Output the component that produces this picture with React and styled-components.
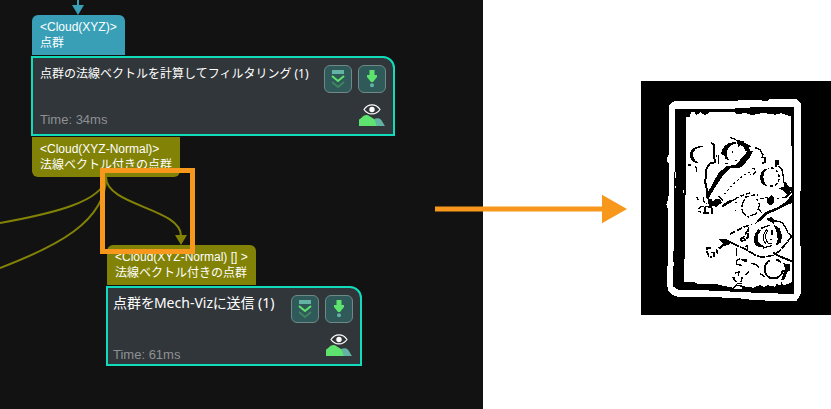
// App.jsx
import React from 'react';
import styled, { createGlobalStyle } from 'styled-components';

const colors = {
  canvas: '#121212',
  card: '#31363a',
  accent: '#10dcbc',
  cloud: '#389fb7',
  normal: '#828306',
  mark: '#f7981d',
  green: '#5ee46e',
  teal: '#62b3a4',
};

const GlobalStyle = createGlobalStyle`
  * {
    box-sizing: border-box;
  }
  body {
    margin: 0;
    background: #fff;
    font-family: 'Liberation Sans', 'Noto Sans CJK JP', sans-serif;
  }
`;

const Page = styled.main`
  display: grid;
  grid-template-columns: minmax(0, 1fr) 348px;
  min-height: 100vh;
`;

const Canvas = styled.section`
  position: relative;
  overflow: hidden;
  background: ${colors.canvas};
`;

const Wires = styled.svg`
  position: absolute;
  top: 0;
  left: 0;
  width: 483px;
  height: 409px;
  pointer-events: none;
`;

const Node = styled.article`
  position: absolute;
  left: ${({ $x }) => $x}px;
  top: ${({ $y }) => $y}px;
  width: ${({ $width }) => $width}px;
  display: flex;
  flex-direction: column;
  align-items: flex-start;
  gap: 1px;
`;

const Port = styled.div`
  height: 40px;
  margin-left: 1px;
  padding: 4px 8px;
  border-radius: ${({ $out }) => ($out ? '0 0 6px 6px' : '6px 6px 0 0')};
  background: ${({ $color }) => $color};
  color: #fff;
  font-size: 12px;
  line-height: 16px;
  white-space: nowrap;
`;

const Card = styled.div`
  width: 100%;
  display: flex;
  justify-content: space-between;
  padding: 7px 7px 2px ${({ $large }) => ($large ? 5 : 7)}px;
  border: 2px solid ${colors.accent};
  border-radius: 0 12px 0 0;
  background: ${colors.card};
`;

const Info = styled.div`
  display: flex;
  flex-direction: column;
  justify-content: space-between;
  padding-bottom: ${({ $large }) => ($large ? 0 : 5)}px;
  white-space: nowrap;
`;

const Title = styled.h2`
  margin: 0;
  color: #fff;
  font-family: 'Noto Sans', 'Noto Sans CJK JP', sans-serif;
  font-size: ${({ $large }) => ($large ? 14 : 12)}px;
  font-feature-settings: ${({ $large }) => ($large ? "'palt'" : 'normal')};
  font-weight: 400;
  line-height: ${({ $large }) => ($large ? 16 : 18)}px;
`;

const Time = styled.span`
  color: #8e9193;
  font-size: 13px;
  line-height: 14px;
`;

const Tools = styled.div`
  display: flex;
  flex-direction: column;
  align-items: flex-end;
  gap: 11px;
  padding-bottom: 6px;
`;

const ButtonRow = styled.div`
  display: flex;
  gap: 6px;
`;

const IconButton = styled.button`
  display: flex;
  width: 28px;
  height: 28px;
  padding: 0;
  border: 1px solid #6d8988;
  border-radius: 6px;
  background: #305a59;
  cursor: pointer;
`;

const EyeButton = styled.button`
  display: flex;
  width: 26px;
  height: 22px;
  margin-right: 1px;
  padding: 0;
  border: 0;
  background: none;
  cursor: pointer;
`;

const Highlight = styled.div`
  position: absolute;
  left: 100px;
  top: 168px;
  width: 95px;
  height: 86px;
  border: 5px solid ${colors.mark};
`;

const Result = styled.section`
  position: relative;
  display: flex;
  justify-content: flex-end;
  align-items: flex-start;
  padding-top: 81px;
`;

const ResultArrow = styled.svg`
  position: absolute;
  left: -48px;
  top: 194px;
`;

const RunIcon = () => (
  <svg width="26" height="26" viewBox="1 1 26 26" fill="none">
    <path d="M8 5h12v4H8z" fill={colors.teal} />
    <path d="M8 17l6 5 6-5" stroke="#3f8460" strokeWidth="2" />
    <path d="M8 11l6 5 6-5" stroke={colors.green} strokeWidth="2" />
  </svg>
);

const StepIcon = () => (
  <svg width="26" height="26" viewBox="1 1 26 26">
    <path d="M11.5 5h5v5h2.5v2l-4 5h-2l-4-5v-2h2.5z" fill={colors.green} />
    <circle cx="14" cy="20.3" r="2" fill={colors.teal} />
  </svg>
);

const EyeIcon = () => (
  <svg width="26" height="22" viewBox="0 0 26 22">
    <path d="M13 22V17.5C15 14 17 14 19 14.2C23 14.5 23.500 19 26 22z" fill={colors.teal} />
    <path d="M0 22V15.500C3 14 4 11 7.500 11C10 11 11 13 13.500 14C16 15 17 19 17.500 22z" fill={colors.green} />
    <path d="M5 5.500C9-.6 17-.6 21 5.500C17 11.400 9 11.400 5 5.500z" fill={colors.card} stroke="#fff" strokeWidth="1.200" />
    <circle cx="13" cy="5.500" r="2.700" fill="#fff" />
  </svg>
);

const StepNode = ({ x, y, width, title, large, time, input, output }) => (
  <Node $x={x} $y={y} $width={width}>
    <Port $color={input.color}>
      {input.type}
      <br />
      {input.label}
    </Port>
    <Card $large={large}>
      <Info $large={large}>
        <Title $large={large}>{title}</Title>
        <Time>Time: {time}</Time>
      </Info>
      <Tools>
        <ButtonRow>
          <IconButton type="button" aria-label="Run to here">
            <RunIcon />
          </IconButton>
          <IconButton type="button" aria-label="Run step">
            <StepIcon />
          </IconButton>
        </ButtonRow>
        <EyeButton type="button" aria-label="Toggle preview">
          <EyeIcon />
        </EyeButton>
      </Tools>
    </Card>
    {output && (
      <Port $out $color={output.color}>
        {output.type}
        <br />
        {output.label}
      </Port>
    )}
  </Node>
);

// binary depth map, 3 units per pixel
const DepthMap = () => (
  <svg width="190" height="234" viewBox="18 18 570 702" shapeRendering="crispEdges" role="img" aria-label="Point cloud">
    <path d="M18 18h570v702H18z" fill="#000" />
    <path
      d="M102 92L112 80L130 78L300 78L318 75L400 77L404 73L485 72L497 84L498 330L495 365L498 655L485 678L400 677L345 674L300 668L130 666L112 660L98 645L96 610L99 540L98 400L94 390L98 378L102 355L102 265L96 260L98 242L103 240z"
      fill="#fff"
    />
    <path d="M120 102L300 102L304 98L476 96L478 360L476 657L380 654L210 646L130 644L115 635L113 560L118 500L118 360z" fill="#000" />
    <path
      d="M153 127L164 125L168 112L178 110L184 120L196 112L210 121L224 112L300 112L304 118L330 114L350 120L385 114L420 119L438 115L468 124L471 300L471 618L456 634L440 630L425 636L405 632L390 637L375 630L355 638L320 633L295 638L262 632L240 626L186 626L180 622L148 622L150 370L153 350z"
      fill="#fff"
    />
    <g fill="#000">
      <path d="M204 213C175 211 165 226 165 240C165 255 177 266 190 264C176 254 173 245 174 237C176 225 184 218 204 216z" />
      <path d="M214 360L228 335L250 295L272 275L305 268L316 254L330 240L334 230L354 227L347 243L334 260L320 277L285 280L262 304L240 337L219 374z" />
      <path d="M302 201C274 199 258 220 258 238L268 240L272 252L284 258C270 241 271 225 288 210L302 207z" />
      <path d="M304 196L325 197L328 207L338 208L343 222L348 230L332 228L326 216L316 210L310 216z" />
      <path d="M419 256h12v14h-5v6h-7z" />
      <path d="M406 279C382 279 374 295 375 309C377 323 384 333 396 333C382 321 382 297 392 286z" />
      <path d="M430 339L446 336L452 319L460 334L477 338V350L466 349L455 358L446 348z" />
      <path d="M395 370L403 367L410 360L418 367V380L411 389H402L397 382z" />
      <path d="M475 349L455 368L420 372L448 366L462 350z" />
      <path d="M358 448L378 423L396 409L430 396L455 378L476 352V382L455 390L422 407L397 418L382 434z" />
      <path d="M217 370L232 372L230 380L246 370L257 374L260 383L243 396L232 392L222 394z" />
      <path d="M260 391L282 376L308 370L286 383L264 397z" />
      <path d="M396 430L410 426L420 436L416 449L408 440L398 438z" />
      <path d="M370 463C354 476 353 501 364 514L390 517L371 503C364 489 368 477 380 465z" />
      <path d="M416 448L434 460L441 480L438 502L422 513L428 493L426 474z" />
      <path d="M248 491L274 492L292 502L278 510L266 514L255 524L250 518L264 506z" />
      <path d="M444 565L466 567V586L457 590L450 612L438 617L446 594L450 578z" />
      <path d="M365 640L375 627L382 640L398 630L420 638L424 626L438 632L437 616L445 631L472 622V650H365z" />
      <path d="M291 606h10v8h-5zM325 553h10v8h-8zM307 380h-6v4h6zM291 228h4v5h-4zM270 263h8v4h-8zM299 254h8v4h-8z" />
    </g>
    <g fill="none" stroke="#000" strokeWidth="4">
      <path d="M228 204L238 210L236 234L240 262L224 266L213 284L214 300L210 318L215 342V368" strokeWidth="6" />
      <path d="M180 275L185 278V290M152 192V208M158 270H168M251 240V268M245 240v5" />
      <path d="M285 187L302 193M324 203L344 214L333 219" />
      <path d="M268 358L285 337L305 318L325 302L344 292" strokeWidth="3" strokeDasharray="6 8" />
      <path d="M350 280h8l3 10-6 8h-10" strokeDasharray="12 5" />
      <path d="M360 218L374 223L384 239L381 247H390V263M380 264h7" />
      <path d="M408 279C435 279 443 326 415 333L398 334" strokeDasharray="9 6" />
      <path d="M430 273L441 284L445 306V320L454 333" />
      <path d="M300 371L325 360L352 352M330 367L355 360H370M374 372L400 366" strokeDasharray="12 6" />
      <path d="M330 373C314 390 319 422 342 426M346 423L364 416L374 390L365 371" strokeDasharray="24 6" />
      <path d="M184 365L190 374M206 366V380L217 385M190 402L200 394H231V414H202L190 408M210 395V417M220 398H231M250 364L265 376" strokeDasharray="20 4" />
      <path d="M372 402L380 414M302 404v5" />
      <path d="M285 478L302 468L318 461L330 455L352 448M315 495L329 482L338 466V488L326 492M318 499L332 495" strokeDasharray="18 5" strokeWidth="5" />
      <path d="M290 504L312 514L336 525L360 540L382 547L414 541L433 528L448 512L470 484" strokeDasharray="25 3" strokeWidth="5" />
      <path d="M418 437L441 442L451 456L459 474L474 485" />
      <path d="M396 463C383 475 381 493 393 508M399 466C388 480 391 495 400 506H412" strokeWidth="3" />
      <path d="M378 460L404 451M384 519L410 512M411 466V480M408 491v5" />
      <path d="M330 515L338 512V527" />
      <path d="M228 518H216V530L222 546H232M244 522L248 538M227 532h14M236 532v15" strokeWidth="5" strokeDasharray="18 4" />
      <path d="M304 518V544M316 551L304 556V568L320 571M329 558L319 553M350 564L364 570L372 578" />
      <path d="M414 533L430 542L448 550L474 560" strokeWidth="6" />
      <path d="M406 556C384 564 384 600 406 609C426 614 440 603 444 586M424 553L438 561" strokeWidth="6" />
      <path d="M301 594L316 590M342 588L332 600M322 606L318 620M375 595L389 606M294 611L306 624M311 590V602" />
    </g>
    <path d="M296 632H320V642H294zM298 620h9v8h-9z" fill="#fff" />
    <path d="M294 640L304 630L322 634M306 626h16" fill="none" stroke="#000" strokeWidth="4" />
    <path d="M120 290v18M121 333v5M145 345v9M114 560v14" stroke="#fff" strokeWidth="3" />
  </svg>
);

const normalLabel = '法線ベクトル付きの点群';

export default function App() {
  return (
    <>
      <GlobalStyle />
      <Page>
        <Canvas>
          <StepNode
            x={31}
            y={15}
            width={364}
            title="点群の法線ベクトルを計算してフィルタリング (1)"
            time="34ms"
            input={{ type: '<Cloud(XYZ)>', label: '点群', color: colors.cloud }}
            output={{ type: '<Cloud(XYZ-Normal)>', label: normalLabel, color: colors.normal }}
          />
          <StepNode
            x={106}
            y={245}
            width={256}
            large
            title="点群をMech-Vizに送信 (1)"
            time="61ms"
            input={{ type: '<Cloud(XYZ-Normal) [] >', label: normalLabel, color: colors.normal }}
          />
          <Wires viewBox="0 0 483 409" fill="none" strokeWidth="2">
            <path d="M78 0V8" stroke={colors.cloud} />
            <path d="M72 5H84L78 15z" fill={colors.cloud} />
            <g stroke={colors.normal}>
              <path d="M106 177C106 206 181 208 181 236" />
              <path d="M106 177C104 202 50 214 0 223" />
              <path d="M106 177C106 222 55 247 0 268" />
            </g>
            <path d="M175 235H187L181 245z" fill={colors.normal} />
          </Wires>
          <Highlight />
        </Canvas>
        <Result>
          <ResultArrow width="192" height="30" viewBox="0 0 192 30" fill={colors.mark}>
            <path d="M0 12.500H168V17.500H0z" />
            <path d="M167 .800L192 15L167 29.200z" />
          </ResultArrow>
          <DepthMap />
        </Result>
      </Page>
    </>
  );
}
